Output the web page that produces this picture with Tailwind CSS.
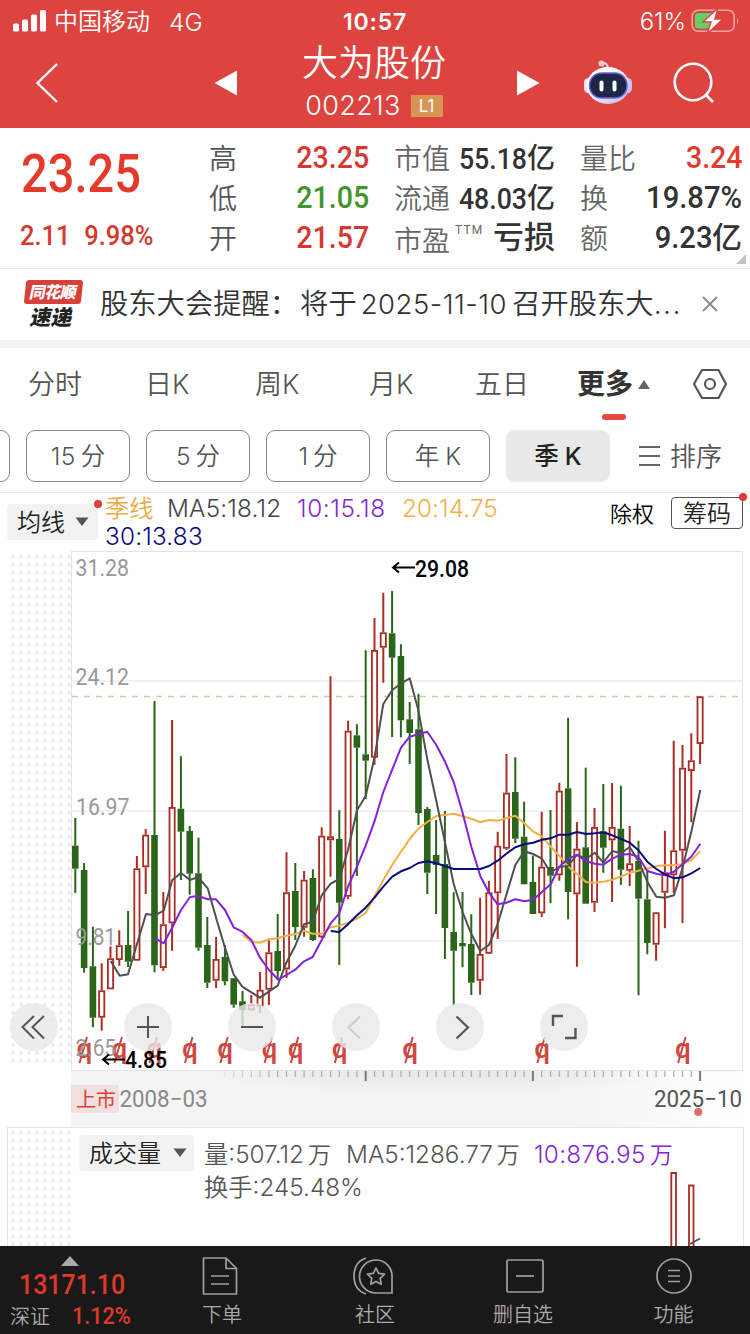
<!DOCTYPE html>
<html lang="zh-CN">
  <head>
    <meta charset="UTF-8" />
    <meta name="viewport" content="width=device-width, initial-scale=1.0" />
    <title>大为股份 002213</title>
    <script src="https://cdn.jsdelivr.net/npm/@tailwindcss/browser@4"></script>
  </head>
  <body class="w-[750px] h-[1334px] overflow-hidden bg-white font-['Inter','Noto_Sans_CJK_SC',sans-serif] text-[#333]">
    <div class="flex flex-col h-[1334px]">
      <!-- Header -->
      <header class="h-32 shrink-0 bg-[#dd443f] text-white">
        <div class="grid grid-cols-3 items-center h-10 px-3">
          <div class="flex items-center">
            <svg class="w-[34px] h-[22px] mr-[8px]" viewBox="0 0 34 22" fill="#fff">
              <rect x="1" y="13.500" width="6" height="8" rx="1.500" />
              <rect x="10" y="9.500" width="6" height="12" rx="1.500" />
              <rect x="19" y="4.500" width="6" height="17" rx="1.500" />
              <rect x="28" y="0" width="6" height="21.500" rx="1.500" />
            </svg>
            <span class="text-[24px] font-[350] leading-10 mt-[2px]">中国移动</span>
            <span class="text-[24.500px] font-[350] leading-10 ml-[19px] mt-[2px]">4G</span>
          </div>
          <div class="text-center text-[23px] font-semibold tracking-[0.8px] pt-[2px]">10:57</div>
          <div class="flex items-center justify-end">
            <span class="text-[24px] font-[350] mr-[5px] mt-[2px]">61%</span>
            <svg class="w-[50px] h-[26px] -mr-[3px]" viewBox="0 0 50 26">
              <rect x="1.200" y="2.200" width="42" height="21" rx="6" fill="none" stroke="#f3a5a2" stroke-width="1.600" />
              <path d="M46 9.500q2.500 3.500 0 7z" fill="#f3a5a2" />
              <rect x="4" y="5" width="20" height="15.500" rx="3" fill="#65cf66" />
              <path d="M27 0L12 14h8l-4 12L32 11h-8z" fill="#fff" stroke="#dd443f" stroke-width="1.500" />
            </svg>
          </div>
        </div>
        <div class="flex items-center h-[86px]">
          <svg class="w-[30px] h-[44px] ml-[33px]" viewBox="0 0 30 44"><path d="M24 3L4.500 22L24 41" fill="none" stroke="#fff" stroke-width="2.400" /></svg>
          <svg class="w-[24px] h-[28px] ml-[151px]" viewBox="0 0 24 28"><path d="M0.500 14L23 1.500V26.500z" fill="#fff" /></svg>
          <div class="w-[272px] flex flex-col items-center">
            <h1 class="text-[36px] leading-[46px] font-[350]">大为股份</h1>
            <div class="flex items-center h-[40px]">
              <span class="text-[27px] font-[350] tracking-[0.300px]">002213</span>
              <span class="ml-[10px] w-8 h-[22px] bg-[#d79455] text-center text-[17px] leading-[22px]">L1</span>
            </div>
          </div>
          <svg class="w-[24px] h-[28px] ml-[6px]" viewBox="0 0 24 28"><path d="M23.500 14L1 1.500V26.500z" fill="#fff" /></svg>
          <svg class="w-[48px] h-[46px] ml-[44px] -mt-[2px]" viewBox="0 0 48 46">
            <defs>
              <linearGradient id="head" x1="0" y1="0" x2="1" y2="1">
                <stop offset="0.300" stop-color="#fff" />
                <stop offset="1" stop-color="#b9b6ea" />
              </linearGradient>
            </defs>
            <path d="M17 4q7-1 7 6" fill="none" stroke="#f1dbe8" stroke-width="2" />
            <circle cx="17.500" cy="4.500" r="3" fill="#f4c9d2" />
            <rect x="0" y="19" width="9" height="15" rx="4.500" fill="#e6e2fa" />
            <rect x="39" y="19" width="9" height="15" rx="4.500" fill="#c6c5f2" />
            <ellipse cx="24" cy="26.500" rx="21.500" ry="18.500" fill="url(#head)" />
            <rect x="5.500" y="14" width="37.500" height="25" rx="12" fill="#1e2748" stroke="#6d63d8" stroke-width="1.400" />
            <rect x="15.500" y="21.500" width="4" height="11" rx="2" fill="#fff" />
            <rect x="28.500" y="21.500" width="4" height="11" rx="2" fill="#fff" />
          </svg>
          <svg class="w-[44px] h-[44px] ml-[41px]" viewBox="0 0 44 44" fill="none" stroke="#fff" stroke-width="2.600">
            <circle cx="20" cy="21" r="18.300" />
            <path d="M32.500 33.500L40 41" />
          </svg>
        </div>
      </header>

      <!-- Quote -->
      <section class="relative flex h-[141px] shrink-0 border-b border-[#e8e8e8] pt-[10px] font-['Roboto','Noto_Sans_CJK_SC',sans-serif] text-[28px] text-[#333]">
        <div class="w-[209px] pl-[21px] text-[#e53a2b]">
          <div class="h-[70px] text-[54px] leading-[71px] font-medium origin-left scale-x-[0.87] whitespace-nowrap">23.25</div>
          <div class="flex gap-[15px] text-[28px] leading-[56px] font-medium text-[#d5392f] origin-left scale-x-[0.91] whitespace-nowrap -ml-px"><span>2.11</span><span>9.98%</span></div>
        </div>
        <div class="w-[160px] leading-10">
          <div class="flex justify-between"><span class="pt-[2px] -mb-[2px] font-[350] text-[#555]">高</span><span class="text-[31px] font-medium text-[#d5392f] origin-right scale-x-[0.92]">23.25</span></div>
          <div class="flex justify-between"><span class="pt-[2px] -mb-[2px] font-[350] text-[#555]">低</span><span class="text-[31px] font-medium text-[#43942d] origin-right scale-x-[0.92]">21.05</span></div>
          <div class="flex justify-between"><span class="pt-[2px] -mb-[2px] font-[350] text-[#555]">开</span><span class="text-[31px] font-medium text-[#d5392f] origin-right scale-x-[0.92]">21.57</span></div>
        </div>
        <div class="w-[161px] ml-[25px] leading-10">
          <div class="flex justify-between h-10 whitespace-nowrap"><span class="pt-[2px] font-[350] text-[#666]">市值</span><span class="flex font-medium"><span class="text-[29px] origin-right scale-x-[0.92] pt-px">55.18</span><span class="pt-px">亿</span></span></div>
          <div class="flex justify-between h-10 whitespace-nowrap"><span class="pt-[2px] font-[350] text-[#666]">流通</span><span class="flex font-medium"><span class="text-[29px] origin-right scale-x-[0.92] pt-px">48.03</span><span class="pt-px">亿</span></span></div>
          <div class="flex justify-between h-10 whitespace-nowrap"><span class="pt-[4px] font-[350] text-[#666]">市盈<sup class="ml-[5px] -top-[17px] text-[12px] leading-none font-normal tracking-[1.200px]">TTM</sup></span><span class="font-medium text-[31px]">亏损</span></div>
        </div>
        <div class="w-[162px] ml-[25px] leading-10">
          <div class="flex justify-between h-10"><span class="pt-[2px] font-[350] text-[#666]">量比</span><span class="text-[31px] font-medium text-[#e53a2b] origin-right scale-x-[0.92]">3.24</span></div>
          <div class="flex justify-between h-10"><span class="pt-[2px] font-[350] text-[#666]">换</span><span class="text-[31px] font-medium origin-right scale-x-[0.94]">19.87%</span></div>
          <div class="flex justify-between h-10"><span class="pt-[2px] font-[350] text-[#666]">额</span><span class="flex font-medium"><span class="text-[31px] origin-right scale-x-[0.94]">9.23</span><span class="text-[30px]">亿</span></span></div>
        </div>
        <svg class="absolute right-[4px] bottom-[4px] w-[10px] h-[10px]" viewBox="0 0 10 10"><path d="M10 0V10H0z" fill="#c4c4c4" /></svg>
      </section>

      <!-- News -->
      <section class="flex h-[79px] shrink-0 border-b-8 border-[#f4f4f4]">
        <div class="w-[100px] pl-[25px] pt-[11px]">
          <div class="w-[57px] h-6 -skew-x-6 rounded-[3px] bg-[#d8403a] text-center text-[16px] leading-[24px] font-black text-white tracking-[-0.500px]"><span class="inline-block -skew-x-6">同花顺</span></div>
          <div class="w-[54px] pt-[2px] text-center text-[21px] leading-[23px] font-black text-[#222] -skew-x-12">速递</div>
        </div>
        <div class="w-[592px] text-[28.300px] leading-[71px] whitespace-nowrap font-[350]"><span>股东大会提醒：</span><span class="ml-[2px]">将于</span><span class="ml-[4px] mr-[5px] text-[27.500px] tracking-[0.500px]">2025-11-10</span><span>召开股东大</span><span class="tracking-[1.500px]">...</span></div>
        <svg class="w-[18px] h-[18px] mt-[26px] ml-[9px]" viewBox="0 0 18 18"><path d="M2 2L16 16M16 2L2 16" stroke="#888" stroke-width="1.800" /></svg>
      </section>

      <!-- Period tabs -->
      <nav class="flex h-[76px] shrink-0 items-center text-[27px] leading-[72px] font-[350] text-[#555] whitespace-nowrap">
        <span class="ml-[28px] -mt-[2px] w-[117px]">分时</span>
        <span class="-mt-[2px] w-[110px]">日K</span>
        <span class="-mt-[2px] w-[114px]">周K</span>
        <span class="-mt-[2px] w-[106px]">月K</span>
        <span class="-mt-[2px] w-[102px]">五日</span>
        <span class="relative flex items-center -mt-[4px] w-[115px] font-bold text-[28px] text-[#333]">更多
          <svg class="ml-[5px] w-[12px] h-[9px]" viewBox="0 0 12 9"><path d="M6 0L12 9H0z" fill="#666" /></svg>
          <i class="absolute left-[25px] bottom-0 w-6 h-[6px] rounded-full bg-[#e5483c]"></i>
        </span>
        <svg class="w-[36px] h-[34px] -mt-[4px]" viewBox="0 0 36 34" fill="none" stroke="#555" stroke-width="2.200">
          <path d="M10 3H26.500L34 17L26.500 31H10L2 17z" stroke-linejoin="round" />
          <circle cx="18" cy="17" r="5" />
        </svg>
      </nav>
      <div class="flex h-[69px] shrink-0 gap-4 pt-[6px] border-b border-[#e8e8e8] text-[24.500px] leading-[51px] text-center font-[350] text-[#555]">
        <div class="w-[10px] h-[52px] rounded-r-[9px] border border-l-0 border-[#888]"></div>
        <div class="w-[104px] h-[52px] rounded-[9px] border border-[#888]"><span class="tracking-[0.500px]">15</span><span class="ml-[5px]">分</span></div>
        <div class="w-[104px] h-[52px] rounded-[9px] border border-[#888]">5<span class="ml-[5px]">分</span></div>
        <div class="w-[104px] h-[52px] rounded-[9px] border border-[#888]">1<span class="ml-[5px]">分</span></div>
        <div class="w-[104px] h-[52px] rounded-[9px] border border-[#888]">年<span class="ml-[6px]">K</span></div>
        <div class="w-[104px] h-[52px] rounded-[9px] bg-[#e9e9e9] leading-[53px] font-medium text-[#222]">季<span class="ml-[6px]">K</span></div>
        <div class="flex items-center h-[52px] pl-[12px]">
          <svg class="w-[23px] h-[22px] mr-[9px]" viewBox="0 0 23 22"><path d="M1 2H22M1 11H22M1 20H22" stroke="#666" stroke-width="1.800" /></svg>
          <span class="text-[26px]">排序</span>
        </div>
      </div>

      <!-- Moving averages -->
      <div class="relative flex h-[58px] shrink-0 text-[24.300px] leading-[28px] whitespace-nowrap font-[350]">
        <div class="flex items-center w-[91px] h-9 mt-[11px] ml-[7px] rounded bg-[#f2f2f2] pl-[10px] text-[24px] text-[#222]"><span class="pt-[2px]">均线</span>
          <svg class="ml-[10px] w-[14px] h-[10px]" viewBox="0 0 14 10"><path d="M0.500 0.500H13.500L7 9z" fill="#555" /></svg>
        </div>
        <i class="absolute left-[94px] top-[7px] size-2 rounded-full bg-[#e33b3b]"></i>
        <div class="ml-[7px] pt-[1px] w-[505px]">
          <div class="flex"><span class="w-[62px] text-[#e9ab4a]">季线</span><span class="w-[130px] text-[#444] tracking-[0.200px]">MA5:18.12</span><span class="w-[105px] text-[#8326d8] tracking-[0.600px]">10:15.18</span><span class="text-[#efb147] tracking-[0.100px]">20:14.75</span></div>
          <div class="text-[#0a0a7d] tracking-[0.200px]">30:13.83</div>
        </div>
        <span class="pt-[7px] text-[22px] text-black">除权</span>
        <span class="ml-[17px] mt-[4px] w-[72px] h-8 rounded-[4px] border border-[#555] text-center text-[24px] leading-[31px] text-[#222]">筹码</span>
        <i class="absolute left-[739px] top-0 size-2 rounded-full bg-[#e33b3b]"></i>
      </div>

      <!-- Candlestick chart -->
      <div class="relative h-[576px] shrink-0">
        <svg class="block w-[750px] h-[576px] font-['Roboto',sans-serif]" viewBox="0 551 750 576">
          <defs>
            <pattern id="dots" x="9" y="552.700" width="8" height="8" patternUnits="userSpaceOnUse"><circle cx="4" cy="4" r="1.900" fill="#ebebeb" /></pattern>
            <linearGradient id="axisBg"><stop offset="0.750" stop-color="#f4f4f4" /><stop offset="1" stop-color="#fff" /></linearGradient>
            <radialGradient id="axisShade" cx="0.500" cy="0" r="0.500" gradientTransform="translate(0 0) scale(1 2)"><stop offset="0.300" stop-color="#000" stop-opacity="0.045" /><stop offset="1" stop-color="#000" stop-opacity="0" /></radialGradient>
          </defs>
          <rect x="9" y="552.700" width="62" height="512" fill="url(#dots)" />
          <rect x="71" y="1071" width="672" height="56" fill="url(#axisBg)" />
          <rect x="190" y="1071" width="500" height="24" fill="url(#axisShade)" />
          <g stroke="#ededed" stroke-width="1.500"><path d="M72 681H742M72 811H742M72 941H742" /></g>
          <rect x="71.500" y="551.500" width="671" height="519" fill="none" stroke="#e4e4e4" />
          <path d="M72 696.500H742" stroke="#d8c6a4" stroke-width="1.500" stroke-dasharray="6 6" />
          <g id="candles"></g>
          <g fill="none" stroke-width="2" stroke-linejoin="round">
            <polyline stroke="#efb147" points="242.3,935 251.3,941.7 260,942.7 269,939.3 277.7,938.3 286.3,935.7 295.3,934 304,930.7 312.7,933.7 321.7,933.7 330.7,927.3 339.3,925.7 348,922.7 357,918.7 365.7,913 374.7,896 383.3,880 392.3,864.7 401,851.7 409.7,839 418.3,828.7 427.3,822 436.3,816 453.7,813.7 471.3,818.7 480.3,822.3 489,820 497.7,820.7 515.3,815.7 524.3,823.3 533,831.3 542,836.7 550.7,846.7 559.3,855.7 568.3,866.7 577,874 586,882 594.7,882.7 603.3,881.7 612.3,879.7 629.7,873 638,870.7 656,866.3 665,865.3 674,865.3 682.7,864 691.3,860 700.3,851.3" />
            <polyline stroke="#505050" points="110.7,961 119.7,975.7 128,974.3 137,944 146,914 155,915.3 163.7,910.7 172.3,880 181,873 190,880 198,877 207.7,888.3 216.7,920 225,947.7 233.7,974.7 242.3,986.7 260,997.7 277.7,985.7 286.3,962.7 295.3,945.7 304,924.3 312.7,921.7 321.7,895.3 330.7,883.7 339.3,879 348,850 357,810.3 365.7,796 374.7,756.7 383.3,704 392.3,690 400.7,683.7 409.7,678.3 418.3,710 427.3,759.3 436.3,800.7 445.3,844 453.7,884 462.7,912.3 471.3,934 480.3,951 489,945 497.7,924 506.3,895 515.3,865 524.3,851.3 533,854 542,858.7 550.7,872.7 559,867 568,866 577,854.7 586,859 594.7,852.7 603.3,862.7 612.3,851 621,853.3 629.7,847 638.7,861.7 647.3,881.7 656.3,896.7 665,897.7 674,895.3 682.7,867.3 691.3,831.7 700.3,790" />
            <polyline stroke="#8322dc" points="155,938 163.7,943.3 172,928 181,910 190,897 198,896 207.7,899.3 216,899.3 225,910 233.7,927.3 242.3,931.7 251.3,940 260,957.7 269,970 278.3,979.7 286.3,975 295.3,969.7 304,961.3 312.7,957 321.7,940 330.7,923.3 339.3,913.3 348,886.7 357,866.7 365.7,845.7 374.7,820.7 383.3,792 392.3,769.3 401,747.7 409.7,736.7 418.3,734.3 427.3,731.7 436.3,745 445.3,762.3 453.7,782 462.7,813.3 471.3,846.7 480.3,876 489,892.7 497.7,904.3 506.3,902.7 515.3,899.3 524.3,901.3 533,899.7 542,892 550.7,884.3 559.3,866.7 568.3,858.7 577,855 586,861 594.7,863.7 603.3,864.7 612.3,858.7 621,854.7 629.7,854 638.3,856.7 647.3,871 656.3,873.7 665,875.3 674,871.7 682.7,864 691.3,856.7 700.3,843.7" />
            <polyline stroke="#0a0a7d" points="330.7,931 339.3,932 348,924.3 357,915.3 365.7,907.7 374.7,897.3 383.3,886.7 392.3,876.7 401,871.3 409.7,868 418.3,863 427.3,861.3 436.3,863.3 453.7,869 480.3,869 489,866 497.7,860.7 506.3,853.7 515.3,847.3 524.3,844.3 533,842.7 542,839.7 550.7,838.3 559.3,834.7 568.3,834.7 577,832 586,834 594.7,833.3 603.3,832.3 612.3,835.3 621,839 629.7,842.7 638.3,850 647.3,861.7 656.3,869 665,874.3 674,878.3 682.7,877.3 691.3,873.3 700.3,868" />
          </g>
          <g id="marks"></g>
          <g id="ticks"></g>
          <g font-size="24" font-weight="450" fill="#999">
            <text x="75.500" y="575.500" textLength="53.500" lengthAdjust="spacingAndGlyphs">31.28</text>
            <text x="75.500" y="685" textLength="53.500" lengthAdjust="spacingAndGlyphs">24.12</text>
            <text x="76" y="815" textLength="53.500" lengthAdjust="spacingAndGlyphs">16.97</text>
            <text x="75.500" y="945" textLength="40.500" lengthAdjust="spacingAndGlyphs">9.81</text>
            <text x="75.500" y="1055.500" textLength="40.500" lengthAdjust="spacingAndGlyphs">2.65</text>
          </g>
          <g font-size="23.500" font-weight="500" fill="#000">
            <text x="415" y="576.500" textLength="54" lengthAdjust="spacingAndGlyphs">29.08</text>
            <text x="125" y="1068" textLength="42" lengthAdjust="spacingAndGlyphs">4.85</text>
          </g>
          <g fill="none" stroke="#000" stroke-width="2">
            <path d="M415 567.500H393M399 562.500L393 567.500L399 572.500" />
            <path d="M125 1059.500H103M109 1054.500L103 1059.500L109 1064.500" />
          </g>
          <rect x="71" y="1085" width="48" height="28" rx="2" fill="#f1dede" />
          <text x="76" y="1107" font-size="20" fill="#d5423b" font-family="Noto Sans CJK SC">上市</text>
          <g font-size="23.500" font-weight="450">
            <text x="119.500" y="1106.500" fill="#888" textLength="88" lengthAdjust="spacingAndGlyphs">2008−03</text>
            <text x="654" y="1106.500" fill="#555" textLength="88" lengthAdjust="spacingAndGlyphs">2025−10</text>
          </g>
          <circle cx="698.300" cy="1112" r="4" fill="#df6b68" />
        </svg>
        <!-- Chart controls -->
        <div class="absolute left-[10px] top-[452px] flex gap-14">
          <button class="size-12 mr-[10px] rounded-full bg-[#e8e8e8]/80"><svg class="size-12" viewBox="0 0 48 48" fill="none" stroke="#555" stroke-width="2"><path d="M24 13L12.500 24L24 35.500M34 13L22.500 24L34 35.500" /></svg></button>
          <button class="size-12 rounded-full bg-[#e8e8e8]/80"><svg class="size-12" viewBox="0 0 48 48" fill="none" stroke="#555" stroke-width="2"><path d="M13 24H35M24 13V35" /></svg></button>
          <button class="size-12 rounded-full bg-[#e8e8e8]/80"><svg class="size-12" viewBox="0 0 48 48" fill="none" stroke="#555" stroke-width="2"><path d="M13 24H35" /></svg></button>
          <button class="size-12 rounded-full bg-[#e8e8e8]/80"><svg class="size-12" viewBox="0 0 48 48" fill="none" stroke="#ccc" stroke-width="2"><path d="M28 13.500L16.500 24.500L28 35.500" /></svg></button>
          <button class="size-12 rounded-full bg-[#e8e8e8]/80"><svg class="size-12" viewBox="0 0 48 48" fill="none" stroke="#555" stroke-width="2.200"><path d="M20.500 13.500L32 24.500L20.500 35.500" /></svg></button>
          <button class="size-12 rounded-full bg-[#e8e8e8]/80"><svg class="size-12" viewBox="0 0 48 48" fill="none" stroke="#555" stroke-width="2.400"><path d="M13 23V13H23M25 35H35.500V25" /></svg></button>
        </div>
      </div>

      <!-- Volume -->
      <section class="relative flex h-[119px] shrink-0 ml-[7px] mr-[6px] border border-b-0 border-[#e4e4e4] text-[24.300px] leading-[32px] font-[350] text-[#555] whitespace-nowrap">
        <svg class="w-[64px] h-[118px]" viewBox="0 0 64 118"><defs><pattern id="dots2" x="1" y="0.700" width="8" height="8" patternUnits="userSpaceOnUse"><circle cx="4" cy="4" r="1.900" fill="#ebebeb" /></pattern></defs><rect x="1" y="0.700" width="62" height="118" fill="url(#dots2)" /></svg>
        <div class="flex items-center w-[115px] h-9 mt-[7px] ml-[7px] rounded bg-[#f2f2f2] pl-[10px] text-[24px] text-[#222]"><span class="pt-[2px]">成交量</span>
          <svg class="ml-[12px] w-[14px] h-[10px]" viewBox="0 0 14 10"><path d="M0.500 0.500H13.500L7 9z" fill="#555" /></svg>
        </div>
        <div class="ml-[10px] pt-[10px]">
          <div class="flex"><span class="w-[142px]">量:507.12<span class="ml-1 text-[23px]">万</span></span><span class="w-[188px]">MA5:1286.77<span class="ml-1 text-[23px]">万</span></span><span class="text-[#8326d8] tracking-[0.300px]">10:876.95<span class="ml-1 text-[23px]">万</span></span></div>
          <div>换手:245.48%</div>
        </div>
        <svg class="absolute left-[650px] top-[40px] w-[50px] h-[78px]" viewBox="658 1168 50 78" fill="none" stroke="#ab2c23" stroke-width="1.800">
          <path d="M671.300 1248V1173H676V1248M689 1248V1185.500H693.500V1248" />
          <path d="M690 1244L700 1238.500" stroke="#505050" />
        </svg>
      </section>

      <!-- Bottom bar -->
      <footer class="grid grid-cols-5 h-[88px] shrink-0 bg-[#191919] text-[20px] font-[350] text-[#aaa]">
        <div class="relative pt-[10px]">
          <svg class="w-[18px] h-[10px] ml-[61px]" viewBox="0 0 18 10"><path d="M9 0L18 10H0z" fill="#aaa" /></svg>
          <div class="ml-[19px] h-[34px] text-[28px] leading-[38px] font-['Roboto'] font-medium text-[#e0392c] origin-left scale-x-[0.89]">13171.10</div>
          <div class="flex h-[30px] ml-[10px] leading-[35px]">深证<span class="ml-[22px] text-[24px] leading-[32px] font-['Roboto'] font-medium text-[#e0392c] origin-left scale-x-[0.9]">1.12%</span></div>
        </div>
        <div class="flex flex-col items-center pt-[10px] pr-[6px]">
          <svg class="w-[36px] h-[40px] mr-[4px]" viewBox="0 0 36 40" fill="none" stroke="#a0a0a0" stroke-width="1.700"><path d="M3 2H24L34.500 12.500V38H1.500V2zM24 2V12.500H34.500M9 20H27M9 28H27" stroke-linejoin="round" /></svg>
          <span class="leading-[38px]">下单</span>
        </div>
        <div class="flex flex-col items-center pt-[10px]">
          <svg class="w-[42px] h-[40px] mr-[4px]" viewBox="0 0 42 40" fill="none" stroke="#a0a0a0" stroke-width="1.700">
            <path d="M14 2Q2 6 2 20T14 38" />
            <path d="M24 4A16 16 0 1 0 24 37H40V20A16 16 0 0 0 24 4z" />
            <path d="M24 12L26.600 17.300L32.500 18.200L28.200 22.300L29.200 28.200L24 25.400L18.800 28.200L19.800 22.300L15.500 18.200L21.400 17.300z" stroke-linejoin="round" />
          </svg>
          <span class="leading-[38px]">社区</span>
        </div>
        <div class="flex flex-col items-center pt-[10px] pr-[4px]">
          <svg class="w-[38px] h-[40px] ml-[4px]" viewBox="0 0 38 40" fill="none" stroke="#a0a0a0" stroke-width="1.700"><rect x="1" y="4" width="36" height="32" rx="1.500" /><path d="M10 20H28" /></svg>
          <span class="leading-[38px]">删自选</span>
        </div>
        <div class="flex flex-col items-center pt-[10px] pr-[3px]">
          <svg class="w-[38px] h-[40px]" viewBox="0 0 38 40" fill="none" stroke="#a0a0a0" stroke-width="1.700"><circle cx="19" cy="20" r="17" /><path d="M13 14.500H25M13 20H25M13 25.500H25" /></svg>
          <span class="leading-[38px]">功能</span>
        </div>
      </footer>
    </div>

    <script>
      const RED = '#ab2c23'
      const GREEN = '#2a651a'
      const STEP = 8.8
      const LEFT = 75.3

      // [up?, wick top, wick bottom, body top, body bottom]
      const candles = [
        [0, 818, 893, 845.7, 868.7], [0, 863, 972.7, 870, 968], [0, 926.7, 1027.3, 966.3, 1017.7], [1, 963.3, 1030.7, 990.3, 1017.7],
        [1, 946.3, 989.3, 958.3, 989.3], [1, 930.3, 965.7, 945.3, 960], [0, 911, 967, 945, 961.7], [1, 856, 960.7, 868.3, 960.7],
        [1, 829, 894, 834.7, 867.3], [0, 701, 972.3, 835, 965.3], [1, 892, 971, 924.3, 968], [1, 720, 950.7, 807, 923.3],
        [0, 756.3, 880, 808.7, 831.7], [0, 826, 894.7, 831, 873.7], [0, 837.7, 950.7, 873.3, 947.7], [0, 917, 988, 945, 982.7],
        [1, 937, 988, 959, 980.7], [0, 945, 985.3, 957, 981.3], [0, 978, 1007.7, 978.3, 1004.7], [0, 991, 1026, 1001.3, 1010],
        [1, 995, 1010.7, 1004.3, 1010.3], [1, 972, 1013.3, 989.7, 1006.7], [1, 940.3, 1005, 952.3, 989.7], [0, 914, 979.3, 951, 971],
        [1, 852.3, 978, 892.3, 969.3], [0, 863, 940, 891, 927], [1, 871, 936.7, 879.7, 927.7], [0, 869.3, 941, 878, 940],
        [1, 827.3, 938, 835.7, 937.3], [1, 676.3, 876.7, 836.3, 840.3], [0, 810.3, 965, 839, 902.7], [1, 720.7, 899.3, 730.7, 896.7],
        [0, 724.3, 876, 735.3, 747.7], [0, 650.3, 799, 754.3, 760.7], [1, 618, 764.7, 650, 757.7], [1, 592.7, 682.7, 632.3, 647.7],
        [0, 591, 737, 633.3, 657.7], [0, 644.3, 737.3, 656, 720.3], [0, 702, 764, 719.3, 733], [0, 693.7, 825, 729.3, 813],
        [0, 807, 894, 809, 872.7], [0, 820, 914, 855, 865], [0, 811, 959, 864, 928], [0, 892.3, 1005.7, 932, 950.7],
        [0, 892, 967.3, 943, 946.3], [0, 914.3, 995, 944, 982.7], [1, 897.7, 994.7, 954, 980.7], [1, 881, 954, 892.3, 953.7],
        [1, 831.7, 939, 845.7, 893.3], [1, 754, 850, 792.7, 848.7], [0, 757.3, 843.3, 792, 838.7], [0, 801.7, 884.3, 836.7, 884.3],
        [0, 855.7, 914, 882, 914], [1, 811.7, 917, 866.7, 913.3], [0, 810, 903.3, 867, 875.7], [1, 782.7, 880.7, 790.7, 875.3],
        [0, 717.7, 919.3, 788.3, 892], [1, 822, 966.7, 848.7, 894.3], [0, 767.7, 903.7, 847.3, 903.7], [1, 808, 912, 827, 902.7],
        [0, 784, 872.7, 831.3, 847.7], [1, 783, 902, 827, 840.3], [0, 785.7, 885, 828.7, 869.7], [1, 826, 886, 863.3, 870.7],
        [0, 840.7, 995.3, 861, 898.7], [0, 870, 954.3, 899.3, 943], [1, 912, 960.7, 912.3, 944.7], [1, 830.7, 928.3, 872.3, 892.7],
        [1, 740.7, 893, 850.3, 875.3], [1, 745, 923, 767.7, 850.7], [1, 733.3, 822.3, 760.3, 771], [1, 696, 764, 696.3, 744],
      ]
      const exRights = [84, 119, 154, 189.5, 224.8, 269, 295.3, 339.3, 409.8, 541.8, 682.6]

      let out = ''
      candles.forEach(([up, hi, lo, top, bottom], i) => {
        const x = LEFT + i * STEP
        const color = up ? RED : GREEN
        out += `<path d="M${x} ${hi}V${top}M${x} ${bottom}V${lo}" stroke="${color}" stroke-width="2"/>`
        out += up
          ? `<rect x="${x - 2.6}" y="${top + 0.9}" width="5.2" height="${bottom - top - 1.8}" fill="#fff" stroke="${color}" stroke-width="1.8"/>`
          : `<rect x="${x - 3.3}" y="${top}" width="6.6" height="${bottom - top}" fill="${color}"/>`
      })
      document.getElementById('candles').innerHTML = out

      document.getElementById('marks').innerHTML = exRights.map((x) =>
        `<text x="${x - 7.6}" y="1057.500" font-size="28" font-weight="500" fill="#cd4840">q</text>
         <path d="M${x + 3} 1037L${x - 4.5} 1063" stroke="#cd4840" stroke-width="2"/>`
      ).join('')

      // the tick row fades in from the left
      let ticks = ''
      for (let i = 17; i < 72; i++) {
        const x = LEFT + i * STEP
        const major = i === 33 || i === 52 || i === 71
        ticks += `<path d="M${x} 1071V${major ? 1081 : 1077}" stroke="${major ? '#777' : '#aaa'}" stroke-width="${major ? 2 : 1.2}" opacity="${Math.min(1, (i - 15) / 8)}"/>`
      }
      document.getElementById('ticks').innerHTML = ticks
    </script>
  </body>
</html>
